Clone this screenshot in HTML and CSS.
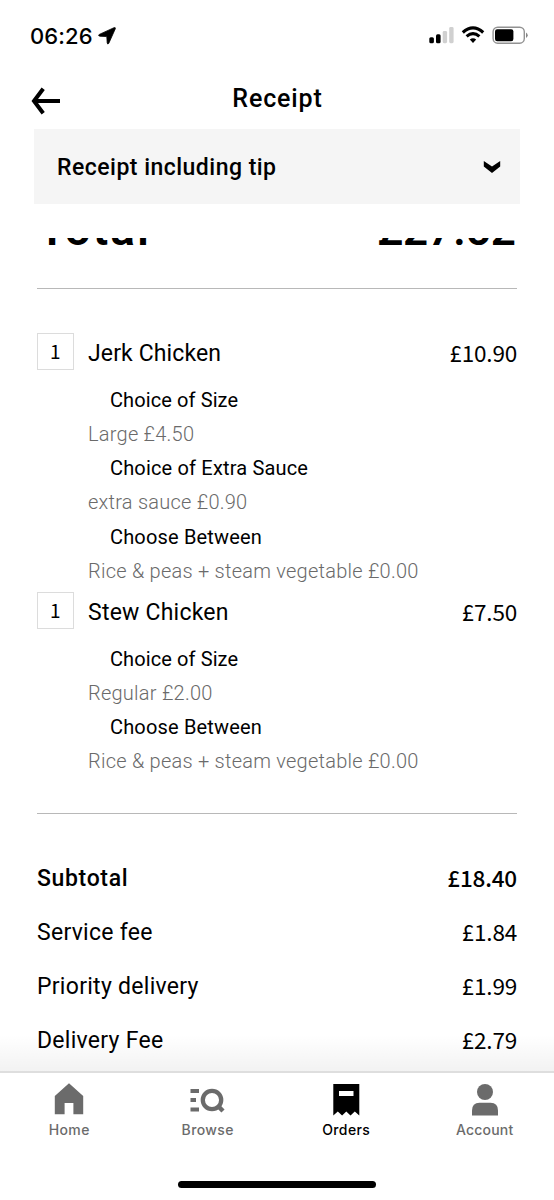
FILE: index.html
```html
<!DOCTYPE html>
<html lang="en">
<head>
<meta charset="utf-8">
<title>Receipt</title>
<link rel="stylesheet" href="styles.css">
</head>
<body>
<div class="screen">
  <div class="status">
    <span class="time">06:26</span>
    <svg class="locate" width="18" height="18" viewBox="0 0 18 18"><path d="M16 .7Q17.900 .2 17.200 2L10.800 16.300Q9.600 18 9.200 16L8.800 9.600 1.800 9.200Q-.4 8.600 1.300 7.400Z" stroke="#000" stroke-width=".8"/></svg>
    <svg class="indicators" width="100" height="20" viewBox="0 0 100 20">
      <rect x="0.3" y="11.2" width="4.6" height="6" rx="1.5"/>
      <rect x="7" y="8.2" width="4.6" height="9" rx="1.5"/>
      <rect x="13.7" y="5" width="4.4" height="12.2" rx="1.4" fill="#d0d0d0"/>
      <rect x="20.2" y="1" width="4.4" height="16.2" rx="1.4" fill="#d0d0d0"/>
      <g fill="none" stroke="#000" stroke-width="3.2"><path d="M33.8 6.5Q44 -2.7 54.2 6.5"/><path d="M37.6 10.4Q44 5 50.4 10.4"/></g>
      <path d="M40.8 13.4Q44 10.9 47.2 13.4L44 17Z"/>
      <rect x="64.1" y="1.2" width="31.2" height="16" rx="4.6" fill="none" stroke="#929292" stroke-width="1.4"/>
      <rect x="66" y="3.2" width="18.4" height="12" rx="2.2"/>
      <path d="M97 6.5Q100.4 9 97 12Z" fill="#858585"/>
    </svg>
  </div>
  <div class="header">
    <svg class="back" width="30" height="28" viewBox="0 0 30 28" fill="none" stroke="#000" stroke-width="4"><path d="M29 14H3"/><path d="M12.2 1.8 3 14l9.2 12.2"/></svg>
    <h1 class="title">Receipt</h1>
  </div>
  <div class="select">
    <span>Receipt including tip</span>
    <svg width="18" height="14" viewBox="0 0 18 14"><path d="M.8 1 9 6.400 17.200 1v5.400L9 13 .8 6.400Z"/></svg>
  </div>
  <div class="scroll">
    <div class="grand"><span class="grand-label">Total</span><span class="grand-price">£27.52</span></div>
    <div class="items">
      <div class="item">
        <div class="item-head"><span class="qty">1</span><span class="name jerk">Jerk Chicken</span><span class="price">£10.90</span></div>
        <div class="group size">Choice of Size</div>
        <div class="option">Large £4.50</div>
        <div class="group">Choice of Extra Sauce</div>
        <div class="option">extra sauce £0.90</div>
        <div class="group">Choose Between</div>
        <div class="option">Rice &amp; peas + steam vegetable £0.00</div>
      </div>
      <div class="item">
        <div class="item-head"><span class="qty">1</span><span class="name">Stew Chicken</span><span class="price">£7.50</span></div>
        <div class="group size">Choice of Size</div>
        <div class="option">Regular £2.00</div>
        <div class="group">Choose Between</div>
        <div class="option">Rice &amp; peas + steam vegetable £0.00</div>
      </div>
    </div>
    <div class="totals">
      <div class="line strong"><span>Subtotal</span><span class="price">£18.40</span></div>
      <div class="line"><span>Service fee</span><span class="price">£1.84</span></div>
      <div class="line"><span>Priority delivery</span><span class="price">£1.99</span></div>
      <div class="line"><span>Delivery Fee</span><span class="price">£2.79</span></div>
    </div>
    <div class="fade"></div>
  </div>
  <div class="nav">
    <div class="tab"><svg width="40" height="36" viewBox="0 0 40 36"><path d="M20 1.2 34.2 14v18.3H24.4V21H15.6v11.3H5.8V14Z"/></svg><span>Home</span></div>
    <div class="tab"><svg width="40" height="36" viewBox="0 0 40 36"><path d="M2.500 7h8.500v4H2.500zM2.500 16h5.500v4H2.500zM2.500 25.400h8.500v4H2.500z"/><circle cx="24" cy="18" r="9.200" fill="none" stroke="currentColor" stroke-width="4.300"/><path d="m29.500 23.500 5.500 5.500" stroke="currentColor" stroke-width="4.500"/></svg><span>Browse</span></div>
    <div class="tab active"><svg width="40" height="36" viewBox="0 0 40 36"><path fill-rule="evenodd" d="M7.300 2h26v31.500l-4.500-4-4.300 4-4.200-4-4.200 4-4.300-4-4.500 4ZM13 9v5h14.500v-5Z"/></svg><span>Orders</span></div>
    <div class="tab account"><svg width="40" height="36" viewBox="0 0 40 36"><circle cx="20" cy="10" r="8"/><path d="M7 33.500v-5Q7 20.700 14.500 20.700h11q7.500 0 7.500 7.800v5Z"/></svg><span>Account</span></div>
  </div>
  <div class="indicator-area"><div class="home-indicator"></div></div>
</div>
</body>
</html>
```
FILE: styles.css
```css
* { box-sizing: border-box; }
body { margin: 0; background: #fff; color: #000; font-family: Roboto, "Liberation Sans", sans-serif; }
.screen { width: 554px; height: 1200px; display: flex; flex-direction: column; overflow: hidden; }
.status { height: 70px; padding: 1px 25px 0 30px; display: flex; align-items: center; flex: none; }
.time { font: 500 22px/30px Inter, sans-serif; letter-spacing: .1px; width: 63px; white-space: nowrap; }
.locate { margin-left: 5px; }
.indicators { margin-left: auto; }
.header { height: 59px; flex: none; display: grid; grid-template-columns: 30px 1fr 30px; padding: 0 30px 0 31px; align-items: center; }
.back { margin-top: 3px; }
.title { margin: -2px 0 0; text-align: center; font-size: 25px; line-height: 30px; font-weight: 500; letter-spacing: .85px; }
.select { height: 75px; flex: none; margin: 0 34px; padding: 1px 19px 0 23px; background: #f5f5f5; display: flex; justify-content: space-between; align-items: center; font-size: 23px; font-weight: 500; letter-spacing: .48px; }
.scroll { flex: 1; min-height: 0; margin-top: 34px; overflow: hidden; position: relative; }
.grand { margin: -40px 37px 0; height: 91px; border-bottom: 1.5px solid #b8b8b8; display: flex; justify-content: space-between; padding: 0 1px 0 1px; font-size: 44px; line-height: 64px; font-weight: 600; }
.grand-label { font-size: 46px; line-height: 62px; letter-spacing: 2px; }
.items { margin: 0 37px; padding: 44px 0 35px; border-bottom: 1.5px solid #b8b8b8; }
.item-head { height: 50px; display: flex; align-items: flex-start; font-size: 23px; line-height: 42px; letter-spacing: .23px; }
.jerk { letter-spacing: .13px; }
.qty { width: 37px; height: 37px; border: 1.5px solid #dcdcdc; margin-right: 14px; text-align: center; font: 400 19px/33px "Noto Sans CJK JP", sans-serif; }
.price { margin-left: auto; font-family: "Noto Sans CJK JP", sans-serif; font-size: 22.5px; letter-spacing: -.2px; }
.item-head .price { line-height: 39px; }
.group, .option { height: 34.15px; line-height: 35px; font-size: 20px; margin-left: 51px; white-space: nowrap; }
.group { padding-left: 22px; letter-spacing: .17px; }
.size { letter-spacing: .1px; }
.option { color: #6a6a6a; font-weight: 300; letter-spacing: .24px; }
.item + .item { margin-top: 4px; }
.totals { padding: 38px 37px 0; }
.line { display: flex; height: 54px; line-height: 54px; font-size: 23px; letter-spacing: .28px; }
.line .price { line-height: 50px; }
.strong { font-weight: 500; letter-spacing: .65px; }
.fade { position: absolute; left: 0; right: 0; bottom: 0; height: 36px; background: linear-gradient(transparent, rgba(0,0,0,.05)); }
.nav { height: 95px; flex: none; border-top: 2px solid #dedede; display: grid; grid-template-columns: repeat(4, 1fr); padding-top: 9px; }
.tab { display: flex; flex-direction: column; align-items: center; color: #6b6b6b; font: 500 14px/20px Inter, sans-serif; letter-spacing: .4px; }
.tab svg { fill: currentColor; display: block; margin-bottom: 2px; }
.tab.active { color: #000; }
.account { letter-spacing: .2px; }
.indicator-area { height: 34px; flex: none; display: flex; justify-content: center; padding-top: 15px; }
.home-indicator { width: 198px; height: 7px; border-radius: 4px; background: #000; }
```
